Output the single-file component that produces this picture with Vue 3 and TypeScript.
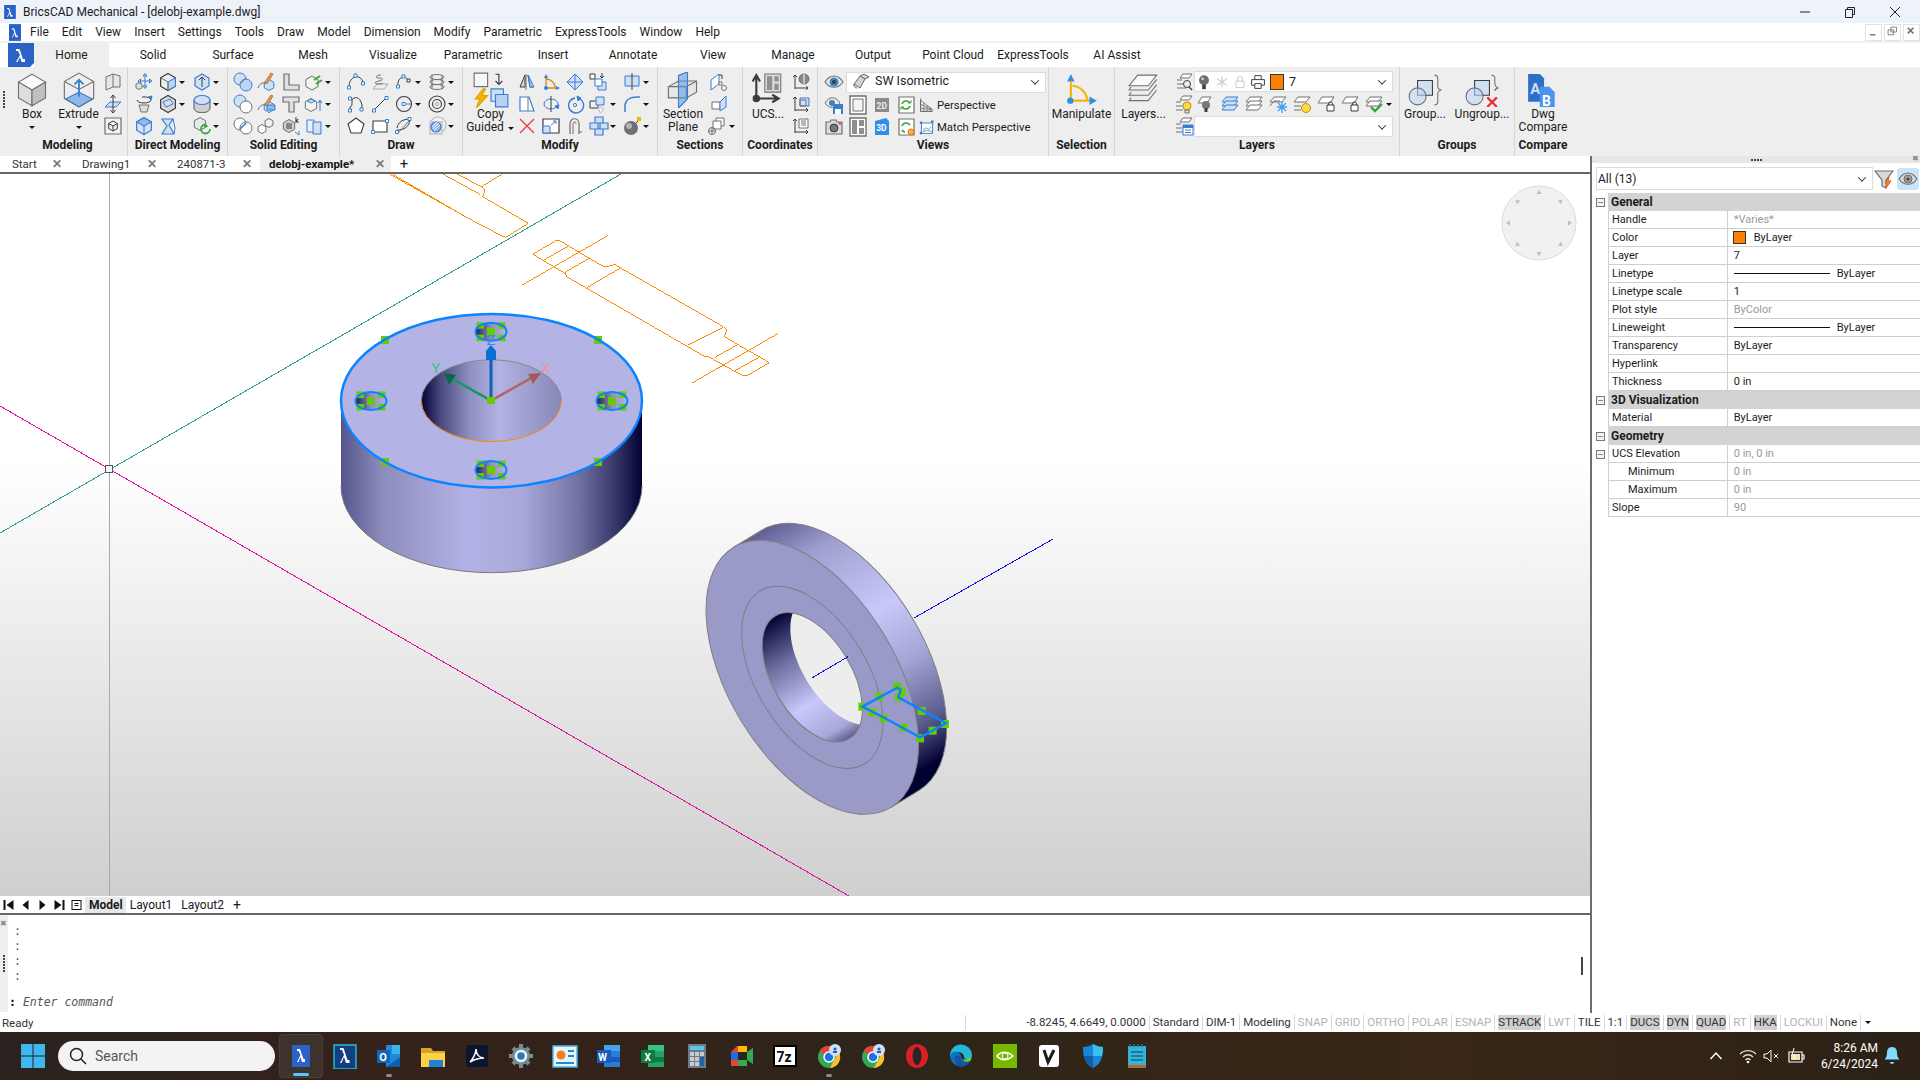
<script setup lang="ts">
import { h } from "vue";
import type { FunctionalComponent } from "vue";

type Shape =
    | { d: string; s: string; f: string; w: number }
    | { t: string; x: number; y: number; fs: number; f: string };

const P = (d: string, s = "none", f = "none", w = 1): Shape => ({ d, s, f, w });
const T = (t: string, x: number, y: number, fs: number, f: string): Shape => ({ t, x, y, fs, f });
const C = (x: number, y: number, r: number) => `M${x - r} ${y}a${r} ${r} 0 1 0 ${r * 2} 0a${r} ${r} 0 1 0 ${-r * 2} 0z`;
const E = (x: number, y: number, rx: number, ry: number) => `M${x - rx} ${y}a${rx} ${ry} 0 1 0 ${rx * 2} 0a${rx} ${ry} 0 1 0 ${-rx * 2} 0z`;
const R = (x: number, y: number, w: number, ht: number) => `M${x} ${y}h${w}v${ht}h${-w}z`;
const hex = (x: number, y: number, r: number) => {
    const a = r * 0.87;
    const b = r / 2;
    return `M${x} ${y - r}l${a} ${b}v${r}l${-a} ${b}l${-a} ${-b}v${-r}z`;
};
const hexIn = (x: number, y: number, r: number) => {
    const a = r * 0.87;
    const b = r / 2;
    return `M${x - a} ${y - b}L${x} ${y}L${x + a} ${y - b}M${x} ${y}v${r}`;
};

const B = "#3b7dd0";
const G = "#707070";
const D = "#3c3c3c";
const L = "#cfe0f5";
const W = "#f2f2f2";
const GN = "#36a836";
const RD = "#e5343a";
const Y = "#f5b400";

// 32 unit icons for the big ribbon buttons
const LARGE: Record<string, Shape[]> = {
    box: [
        P("M16 2l12 7-12 7-12-7z", G, "#fafafa"),
        P("M4 9l12 7v14L4 23z", G, "#dedede"),
        P("M28 9L16 16v14l12-7z", G, "#bfbfbf")
    ],
    extrude: [
        P("M16 18l12 6-12 7-12-7z", B, "#8db8ec"),
        P(hex(16, 16, 15), G, "none"),
        P("M3 8.5l13 7 13-7", G),
        P("M16 22V7M12 11l4-4 4 4", B, "none", 1.6)
    ],
    copy: [
        P(R(1, 1, 12, 12), G, "#f7f7f7"),
        P("M20 2h3v9M20 8l3 3 3-3", D),
        P("M9 15L2 24h4l-3 8 10-11H8l3-6z", "#e0a000", Y),
        P(R(16, 15, 11, 11), B, L),
        P(R(20, 20, 11, 11), B, "#b6d2f4")
    ],
    section: [
        P("M3 13l9-5 16 0v10l-9 5H3z", G, "#e6e6e6"),
        P("M3 13h16l9-5M19 13v10", G),
        P("M12 3l8-3v24l-8 8z", B, "rgba(90,150,225,.55)")
    ],
    ucs: [
        P("M5 24V4M1.5 8L5 2l3.5 6", D, "none", 2),
        P("M5 24h19M20 20.5l6 3.5-6 3.5", D, "none", 2),
        P(C(5, 24, 3), D, D),
        P(R(13, 1, 15, 17), G, "#dcdcdc"),
        P(R(15, 3, 5, 13) + R(22, 3, 4, 5) + R(22, 10, 4, 6), "none", "#8f8f8f")
    ],
    manipulate: [
        P("M9 8L5.5 1 2 8z", "none", "#2f8fe8"),
        P("M5.5 8v18h18", Y, "none", 2),
        P("M7 12a15 15 0 0 1 14 14", Y, "none", 2),
        P(C(5, 26, 3), "none", "#2f8fe8"),
        P("M23 22l7 4-7 4z", "none", "#2f8fe8")
    ],
    layers: [
        P("M10 2h18l-8 10H2z", G, "#fafafa"),
        P("M4 13l-2 3h18l8-10", G),
        P("M4 18l-2 3h18l8-10", G),
        P("M4 23l-2 3h18l8-10", G)
    ],
    group: [
        P(R(9, 7, 14, 14), D, L),
        P(C(9, 22, 8), G, "rgba(190,215,245,.6)"),
        P("M25 2c4 0 3 4 3 8s0 5 3 6c-3 1-3 2-3 6s1 8-3 8", G)
    ],
    ungroup: [
        P(R(9, 7, 14, 14), D, L),
        P(C(9, 22, 8), G, "rgba(190,215,245,.6)"),
        P("M25 2c4 0 3 4 3 6s0 5 3 6c-3 1-3 2-3 3", G),
        P("M21 23l9 9M30 23l-9 9", RD, "none", 2.2)
    ],
    compare: [
        P("M2 1h11l4 4v22H2z", "none", "#2f6fc4"),
        T("A", 4, 20, 14, "#cfe0f5"),
        P("M13 13h9l5 5v17H13z", "none", "#4a93ee"),
        T("B", 15, 31, 13, "#fff")
    ]
};

// 20 unit icons for the small ribbon buttons
const SMALL: Record<string, Shape[]> = {
    wall: [P("M3 5l7-3 0 13-7 3zM10 2l7 2v11l-3 0-4 0", G, "#e6e6e6")],
    plane: [P("M2 13l5-5h11l-5 5z", B, L), P("M10 1v18M7.5 4l2.5-3 2.5 3M7.5 16l2.5 3 2.5-3", D)],
    framecube: [P(R(2, 2, 16, 16), G, W, 1.2), P(hex(10, 10, 5) + hexIn(10, 10, 5), D)],
    move: [P(hex(5, 14, 3.5), G, "#ddd"), P("M11 2v14M4 9h14", B), P("M9 4l2-2.5 2 2.5zM9 14l2 2.5 2-2.5zM15.5 7l2.5 2-2.5 2zM6.5 7L4 9l2.5 2z", B, L)],
    pushA: [P(hex(10, 10, 8.5), D, "#eee", 1.2), P("M10 10l7.4-4v8l-7.4 4.5z", B, "#bcd5f2"), P("M3 6l7 4v8", G)],
    arrowHex: [P(hex(10, 10, 8), B, L, 1.2), P("M10 15V5M7 8l3-3 3 3", D)],
    revolve: [P("M5 11h10l-2 7H7z", G, "#ddd"), P("M3 6a7 3 0 0 0 14 0a7 3 0 0 0-9-3", D), P("M14 3l3 3 1-4z", B, B)],
    pushB: [P(hex(10, 10, 8.5), D, "#d9d9d9", 1.2), P("M5 8l7-3 3 5-7 3z", B, L)],
    cyl: [P("M2 6v8c0 6 16 6 16 0V6", G, "#cfcfcf", 1.2), P(E(10, 6, 8, 4.5), B, L, 1.2)],
    cubeBlue: [P(hex(10, 10, 8.5), B, "#cfe3fa", 1.2), P(hexIn(10, 10, 8.5), B), P("M2.6 6L10 2l7.4 4-7.4 4z", B, "#8db8ec")],
    twist: [P("M4 3h11l-4 6 5 9H4l5-8z", B, L, 1.2), P("M15 3l2 9-1 6", B)],
    rotateCube: [P(hex(8, 8, 6.5), G, "#e8e8e8"), P("M18 13a4.5 4.5 0 1 1-4.5-4.5", GN, "none", 1.8), P("M12 11l1.5-3 2 2.5z", GN, GN)],
    unionA: [P(C(7, 7, 6), B, L), P(C(13, 13, 6), B, "#bcd5f2"), P("M8 11l5-5", G)],
    paintA: [P(hex(13, 13, 5.5), B, L), P("M2 16c2-6 7-6 8-4", G), P("M9 10l6-9 2 1-6 10z", "#c27a3c", "#d89a5c")],
    angleL: [P("M3 2h5v11h10v5H3z", G, "#e0e0e0", 1.2)],
    cubeGreen: [P(hex(8, 11, 7), G, W), P("M10 8l6-4M12 12l6-4", GN, "none", 2)],
    unionB: [P(C(7, 7, 6), B, L), P(C(13, 13, 6), G, "#fff")],
    paintB: [P(hex(13, 13, 5.5), B, L), P("M2 16c2-6 7-6 8-4", G), P("M9 10l6-9 2 1-6 10z", "#c27a3c", "#d89a5c"), P(R(11, 11, 8, 5), B, "#8db8ec")],
    angleT: [P("M2 3h16v5h-5v10H8V8H2z", G, "#e0e0e0", 1.2)],
    cubeUp: [P(hex(7, 11, 6.5), G, W), P("M3 7l4-2 4 2-4 2z", B, L), P("M16 17V6M14 9l2-3 2 3", B)],
    unionC: [P(C(7, 8, 6), G, "#fff"), P(C(13, 12, 6), G, "#fff"), P("M7 13l6-6", B, "none", 1.6)],
    cubes: [P(hex(6, 13, 4.5), G, "#fff"), P(hex(13, 7, 4.5), G, "#f0f0f0")],
    notes: [P(hex(8, 10, 6.5), G, "#d0d0d0"), P("M5 8h6M5 10h6M5 12h6", D), P("M14 16l4 3M18 15v4", B), T("k", 14, 7, 7, D)],
    slabs: [P("M3 4h7v12H3z", B, "#e8f0fb"), P("M9 6h8v12H9z", B, L)],
    arc: [P("M3 15C3 4 14 1 17 10", D), P(R(1.5, 14, 3, 3) + R(15.5, 10, 3, 3) + R(8, 2, 3, 3), B, "#fff")],
    spiral: [P("M3 17l4-5h11l-4 5z", "#aaa", "#eee"), P("M11 3c-6 0-6 3-2 3s5 2 0 3-5 3 0 3 3-1 3-1", G)],
    arc2: [P("M4 14C3 6 10 2 14 8", D), P(R(2.5, 13, 3, 3) + R(8, 3, 3, 3), B, "#fff"), P(R(13, 7, 3, 3), D, "#fff")],
    helix: [P("M5 3v14M15 3v14", G), P(E(10, 5, 7, 2.5) + E(10, 10, 7, 2.5) + E(10, 15, 7, 2.5), G)],
    poly: [P("M4 16V13C8 12 4 5 8 4s6 0 8 7v4", D), P(R(2.5, 15, 3, 3) + R(2.5, 3, 3, 3) + R(14, 14, 3, 3), B, "#fff")],
    line: [P("M4 16L16 4", D), P(R(2.5, 15, 3, 3) + R(15, 2.5, 3, 3), B, "#fff")],
    circ: [P(C(10, 10, 7.5), D, "none", 1.1), P(R(8, 8.5, 3, 3), B, "#fff"), P("M11 10h6", B)],
    donut: [P(C(10, 10, 8) + C(10, 10, 4.5), D, "none", 1.1), P(C(10, 10, 1.5), "#aaa")],
    pent: [P("M10 2l8 6-3 9H5L2 8z", D, "#fff", 1.1)],
    rect: [P(R(3, 5, 14, 11), D, "#fff", 1.1), P(R(1.5, 14.5, 3, 3) + R(15.5, 3.5, 3, 3), B, "#fff")],
    leaf: [P("M3 12C4 6 9 3 16 3M3 14c7 0 12-3 13-10", D), P("M4 17l12-13", G), P(R(1.5, 14.5, 3, 3) + R(14, 1.5, 3, 3), B, "#fff")],
    hatch: [P(C(11, 9, 8), "#c4c4c4", "#f2f2f2", 1.4), P(R(3, 6, 12, 12), "#c4c4c4", "#e8e8e8", 1.4), P(C(9, 11, 5), B, "#8db8ec", 1.2), P("M6 13l6-6M7 15l6-6M5 11l5-5", "#fff")],
    flip: [P("M8 3L3 15h5zM11 3l5 12h-3z", D, "#d8d8d8"), P("M9 2v16", G), P("M11 3l6 12h-4z", B, "#9fc2ef")],
    angleDim: [P("M5 16H15M5 7c5 0 9 4 9 8M5 5v11", "#cf8a10", "none", 1.3), P("M3 6l2-4 2 4z", "none", B), P(C(5, 16, 2), "none", B), P("M15 14l4 2-4 2z", "none", B)],
    moveD: [P("M10 2l8 8-8 8-8-8z", B, L), P("M10 2v16M2 10h16", B)],
    arrDown: [P(R(1, 2, 5, 5), D, "#fff"), P(R(9, 10, 8, 8), B, L), P(R(6, 7, 7, 7), B, "#fff"), P("M13 1v5M11 4l2 2 2-2", D)],
    mirrorH: [P(R(3, 4, 14, 10), B, L), P("M10 1v17", D)],
    taper: [P("M3 3h9l5 14H3z", B, "#fff", 1.2), P("M11 3v14", G)],
    rotC: [P("M3 10a7 5 0 0 1 14 0M17 10a7 5 0 0 1-14 0", B), P("M10 2v16", D), P("M14 12l3 3 1-4z", B, B)],
    rotD: [P("M15 5a7.5 7.5 0 1 1-5-1", B, "none", 1.4), P(C(10, 11, 1.6), B), P("M12 2l4 2-3 3z", B, B)],
    stretch: [P(R(1, 7, 8, 7), D, "#eee"), P(R(7, 3, 8, 8), B, L), P("M9 13l5 1v3l-3 2z", "#bbb", "#f4f4f4")],
    fillet: [P("M3 18v-6C3 6 8 3 15 3h3", B, "none", 1.5)],
    del: [P("M3 3l14 14M17 3L3 17", RD, "none", 1.2)],
    scale: [P(R(2, 3, 16, 14), D, "#fff", 1.2), P(R(2, 10, 7, 7), B, L), P("M10 9l5-4M12 5h3v3", B)],
    pedit: [P("M5 18V8c0-7 9-7 9 0v10", G, "none", 1.2), P("M8 18V8c0-3 3-3 3 0", G), P("M14 16h3", G)],
    arrayD: [P(R(6, 1, 8, 6) + R(1, 7, 8, 6) + R(11, 7, 8, 6) + R(6, 13, 8, 6), B, L, 1.2)],
    bomb: [P(C(9, 12, 7), "none", "#6f6f6f"), P(C(7, 10, 3), "none", "#b4b4b4"), P("M14 7l3-3", D), P(R(15, 1, 4, 4), "none", Y)],
    planeA: [P("M3 8l8-6v10l-8 6z", B, "#fff"), P(R(11, 10, 3, 3) + C(16, 16, 2.5), G, "#fff"), P("M11 3h3v4", D)],
    planeB: [P("M4 8h8v7H4z", G, "#fff"), P("M12 8l6-6v11l-6 4z", B, L)],
    planeC: [P(R(8, 2, 8, 8), G, "#fff"), P(R(5, 5, 8, 8), G, "#fff"), P(C(4, 15, 3.5) + "M4 11.5v7M0.5 15h7", G)],
    ucsWorld: [P("M3 17V3M1 5l2-2 2 2M3 16h13M14 14l2 2-2 2", D), P(C(12, 7, 5), G, "#888"), P("M12 2v10", "#fff")],
    ucsFace: [P("M3 17V3M1 5l2-2 2 2M3 16h13M14 14l2 2-2 2", D), P(R(8, 4, 9, 8), B, L), P(R(8, 6, 6, 6), G)],
    ucsView: [P("M3 17V3M1 5l2-2 2 2M3 16h13M14 14l2 2-2 2", D), P(R(7, 3, 9, 9), G, "#fff"), P("M9 5h5M9 7h5M9 9h5", G)],
    eye: [P("M1 10c5-8 13-8 18 0c-5 7-13 7-18 0z", G, "#e8e8e8", 1.2), P(C(10, 10, 4.5), "none", "#4f7fae"), P(C(10, 10, 2), "none", "#1f3f5f")],
    eyeSave: [P("M1 8c4-7 11-7 15 0c-4 6-11 6-15 0z", G, "#e8e8e8"), P(C(8, 8, 3), "none", "#4f7fae"), P(R(9, 9, 10, 10), "none", B), P(R(11, 14, 6, 5), "none", "#fff")],
    frame1: [P(R(2, 1, 16, 18), G, "#fff", 1.4), P(R(5, 4, 10, 12), G, "#f4f4f4")],
    frame2: [P(R(2, 1, 16, 18), G, "#fff", 1.4), P(R(4, 3, 5, 14) + R(11, 3, 5, 6) + R(11, 11, 5, 6), "none", "#8f8f8f")],
    d2: [P(R(3, 3, 14, 14), "none", "#8a8a8a"), T("2D", 4.5, 13.5, 8.5, "#eee")],
    d3: [P("M3 4l11-3 3 3v14H3z", "none", "#2f8fe8"), T("3D", 4.2, 14, 8.5, "#fff")],
    refresh: [P(R(3, 2, 15, 16), G, "#fff", 1.2), P("M6 9a4.5 4.5 0 0 1 8-1M14 11a4.5 4.5 0 0 1-8 1", GN, "none", 1.6), P("M12 8h3V5M8 12H5v3", GN)],
    refresh2: [P(R(3, 2, 15, 16), G, "#fff", 1.2), P("M6 9a4.5 4.5 0 0 1 8-1M6 13a4 4 0 0 0 3 2", GN, "none", 1.6), P(C(15, 15, 3), "#f06a10", "#f8b040")],
    camera: [P("M2 5h4l1-2h5l1 2h5v12H2z", G, "#dcdcdc", 1.2), P(C(10, 11, 4), D, "#777"), P(R(15, 6, 2, 1), RD)],
    persp: [P("M2 2v16h15", D), P("M2 4l15 12M2 9l15 7M2 14l15 2M6 7v11M10 10v8M14 13v5", G)],
    match: [P(R(3, 5, 14, 13), B, "#fff", 1.2), P(R(1, 3, 3, 3) + R(15, 2, 3, 3) + R(1, 16, 3, 3), "none", B), P("M5 14l4-3 3 2 3-3", B), P("M5 16c3-2 8-2 11 0", G)],
    layerF: [P("M3 16h9M3 12h7M3 8h5", G), P("M6 6l3-4h9l-3 4z", G, "#fff"), P(C(13, 12, 3.5), D, "#eee"), P("M15 15l3 3", D, "none", 1.4)],
    layerY: [P("M2 16h7M2 12h7M2 8h5", G), P("M6 6l3-4h9l-3 4z", G, "#fff"), P(C(13, 12, 4), "#c09000", "#ffd84a"), P(R(11, 16, 4, 3), G, "#ddd")],
    layerM: [P("M2 16h8M2 12h6M2 8h5", G), P("M6 6l3-4h9l-3 4z", G, "#fff"), P(R(9, 9, 10, 10), B, "#fff"), P(R(9, 9, 10, 3), "none", B), P("M11 14h6M11 16.5h6", B)],
    bulb: [P(C(10, 8, 5.5), "none", "#6e6e6e"), P(R(8, 13, 4, 5), "none", D), P(C(8.5, 6.5, 1.5), "none", "#d8d8d8")],
    snow: [P("M10 3v14M4 6l12 8M16 6L4 14", "#c6d0da", "none", 1.6)],
    lock: [P(R(5, 9, 10, 8), "#c0c0c0", "#fff"), P("M7 9V6c0-4 6-4 6 0v3", "#c0c0c0")],
    print: [P("M6 7V2h8v5M6 14H2V7h16v7h-4", D, "#fff", 1.2), P(R(6, 12, 8, 6), D, "#fff", 1.2)],
    layBulb: [P("M2 9l4-6h9l-4 6z", G, "#fff"), P(C(10, 11, 4), "none", "#777"), P(R(8.5, 14, 3, 4), "none", D)],
    layBlue: [P("M2 8l4-5h12l-4 5z", B, L), P("M2 12l4-5h12l-4 5z", B, L), P("M2 16l4-5h12l-4 5z", B, L)],
    layGray: [P("M2 8l4-5h12l-4 5z", G, "#fff"), P("M2 12l4-5h12l-4 5z", G, "#fff"), P("M2 16l4-5h12l-4 5z", G, "#fff")],
    layFrz: [P("M2 8l4-5h12l-4 5z", G, "#fff"), P("M2 12l4-5h6", G), P("M14 8v11M9 13h10M10 9l8 8M18 9l-8 8", "#3f9df5", "none", 1.3)],
    laySun: [P("M2 8l4-5h12l-4 5z", G, "#fff"), P("M2 12h7M2 16h7", G), P(C(14, 14, 4.5), "#c09000", "#ffd84a")],
    layLock: [P("M2 9l4-6h12l-4 6z", G, "#fff"), P(R(11, 11, 7, 6), D, "#fff"), P("M12.5 11V9.5c0-2 4-2 4 0V11", D)],
    layChk: [P("M2 8l4-5h12l-4 5z", G, "#fff"), P("M2 12l4-5h12l-4 5z", G, "#fff"), P("M7 13l4 4 7-7", GN, "none", 2.4)],
    mini: [P(R(4, 13, 8, 2), "none", "#707070")],
    resto: [P(R(3, 7, 8, 7) + R(7, 3, 8, 7), "#707070", "#fff", 1.2)],
    xsm: [P("M4 4l8 8M12 4l-8 8", "#707070", "none", 2.2)],
    filter: [P("M1 2h18l-7 9v8l-4-2v-6z", G, "#d9d9d9", 1.2), P("M15 8l-4 6h3l-2 5 5-7h-3z", "#e06010", "#ff8a1a")],
    eyeBtn: [P("M1 10c5-8 13-8 18 0c-5 7-13 7-18 0z", G, "#d8d8d8", 1.2), P(C(10, 10, 4), G, "#a0a0a0"), P(C(10, 10, 1.6), "none", "#444")]
};

// 26 unit icons for the taskbar
const TASK: Record<string, Shape[]> = {
    bc1: [P(R(4, 2, 18, 22), "none", "#2a62c8"), P("M9 19l3.5-7-2-4H9V6h3l3.5 10h1.5v3h-3l-1.5-5-2 5z", "none", "#fff")],
    bc2: [P(R(2, 2, 22, 24), "#25c3c3", "#123f84", 1.4), P("M8 20l4-8-2-5H8V5h3.5l4 12 2 0v3h-3.5l-2-6-2.5 6z", "none", "#fff")],
    outlook: [P(R(10, 2, 14, 22), "none", "#1c8ad8"), P(R(16, 2, 8, 9), "none", "#39b4ea"), P("M10 24l14-10v10z", "none", "#0f5fb0"), P(R(1, 7, 13, 13), "none", "#0f65b8"), T("O", 3.2, 18, 11, "#fff")],
    folder: [P("M1 5h10l2 3h12v16H1z", "none", "#d9a221"), P(R(1, 10, 24, 14), "none", "#fbd145"), P(R(9, 17, 14, 7), "none", "#1f84d8")],
    acrobat: [P("M2 5a3 3 0 0 1 3-3h16a3 3 0 0 1 3 3v16a3 3 0 0 1-3 3H5a3 3 0 0 1-3-3z", "none", "#0a1630"), P("M6 19c3-3 6-9 6-13 0 5 3 9 8 9-6 0-9 1-14 4z", "#fff", "none", 1.5)],
    gear: [P(R(11, 1, 4, 24) + R(1, 11, 24, 4), "none", "#7d8a92"), P("M5 5l16 16M21 5L5 21", "#7d8a92", "none", 4), P(C(13, 13, 9), "none", "#7d8a92"), P(C(13, 13, 5), "#dff", "#3d6fb8", 2.5)],
    chart: [P(R(1, 3, 24, 21), "#4ab4e8", "#e8f4fb", 1.5), P(C(9, 12, 4.5), "none", "#f08020"), P(R(16, 7, 6, 2) + R(16, 12, 6, 2) + R(4, 19, 18, 2), "none", "#1c8ad8")],
    word: [P(R(8, 2, 16, 22), "none", "#2b7cd3"), P(R(8, 2, 16, 6), "none", "#41a5ee"), P(R(8, 14, 16, 5), "none", "#185abd"), P(R(1, 7, 14, 13), "none", "#185abd"), T("W", 2.3, 17.5, 10, "#fff")],
    excel: [P(R(8, 2, 16, 22), "none", "#21a366"), P(R(8, 2, 16, 6), "none", "#33c481"), P(R(8, 14, 16, 5), "none", "#107c41"), P(R(1, 7, 14, 13), "none", "#107c41"), T("X", 4.5, 17.5, 10, "#fff")],
    calc: [P(R(4, 1, 18, 24), "none", "#6f7c85"), P(R(6, 3, 14, 4), "none", "#5fc4ea"), P(R(6, 9, 4, 4) + R(11, 9, 4, 4) + R(16, 9, 4, 4) + R(6, 14, 4, 4) + R(11, 14, 4, 4) + R(6, 19, 4, 4) + R(11, 19, 4, 4), "none", "#c4ccd2"), P(R(16, 14, 4, 9), "none", "#1e62b0")],
    meet: [P("M3 9l6-6h10v20H9l-6 0z", "none", "#ea4335"), P(R(3, 9, 7, 8), "none", "#1f6fd8"), P(R(10, 3, 9, 7), "none", "#fbbc04"), P(R(10, 16, 9, 7), "none", "#34a853"), P(R(10, 9, 9, 8), "none", "#2b2420"), P("M19 9l6-4v16l-6-4z", "none", "#34a853")],
    seven: [P(R(2, 3, 22, 20), "#000", "#fff", 1.5), P(R(2, 3, 22, 20), "#000", "none", 2), T("7z", 4.5, 19, 14, "#111")],
    chrome: [P(C(13, 14, 11), "none", "#34a853"), P("M13 3a11 11 0 0 1 10 6H13a5 5 0 0 0-5 3L4 7a11 11 0 0 1 9-4z", "none", "#ea4335"), P("M23 9a11 11 0 0 1-9 16l4-8a5 5 0 0 0 0-8z", "none", "#fbc02d"), P(C(13, 14, 5), "#fff", "#1a73e8", 1.5), P(C(19, 7, 6), "none", "#cfe0f5"), P(C(19, 6, 1.6) + R(17, 8, 4, 2), "none", "#1a5fb8")],
    opera: [P(E(13, 13, 11, 12), "none", "#d81f26"), P(E(13, 13, 4.5, 9), "none", "#2b2420")],
    edge: [P("M2 13a11 11 0 0 1 22-1c0 5-8 6-8 2 0-5-8-7-11-1", "none", "#23b8d8"), P("M2 13c1-5 10-6 11 0 1 6 6 7 10 4a11 11 0 0 1-21-4z", "none", "#0f6fc0"), P("M7 14c2-2 6-2 6 2 0 3 4 5 8 3a11 11 0 0 1-9 5c-4-2-6-6-5-10z", "none", "#1452a0"), P("M14 14c0 4 8 3 10-1a11 11 0 0 0-1 4c-4 3-8 2-9-3z", "none", "#7ed321")],
    nvidia: [P(R(1, 1, 24, 24), "none", "#76b900"), P("M5 13c4-5 10-5 16 0-6 5-12 5-16 0z", "#fff", "none", 1.4), P(C(13, 13, 3), "#fff")],
    vee: [P("M3 5a3 3 0 0 1 3-3h14a3 3 0 0 1 3 3v16a3 3 0 0 1-3 3H6a3 3 0 0 1-3-3z", "none", "#fff"), P("M8 7l4 12L18 7", "#1c1c1c", "none", 3)],
    shield: [P("M13 1c3 2 7 3 10 3 0 10-2 17-10 21C5 21 3 14 3 4c3 0 7-1 10-3z", "none", "#1a86d8"), P("M13 1c3 2 7 3 10 3 0 4-.4 7-1 9H13z", "none", "#3dc0f0"), P("M13 13H4c1 5 4 9 9 12z", "none", "#0f5fa8")],
    notepad: [P(R(4, 3, 18, 22), "none", "#33b3d8"), P(R(4, 22, 18, 3), "none", "#b46a2a"), P("M6 1v3M10 1v3M14 1v3M18 1v3", "#16708c", "none", 1.6), P("M7 9h12M7 13h12M7 17h12", "#0f6a88", "none", 1.6)]
};

const Ico: FunctionalComponent<{ n: string; s?: number }> = (props) => {
    const big = props.n in LARGE;
    const task = props.n in TASK;
    const shapes = LARGE[props.n] ?? TASK[props.n] ?? SMALL[props.n] ?? [];
    const vb = big ? 32 : task ? 26 : 20;
    const size = props.s ?? vb;
    const kids = shapes.map((sh) =>
        "t" in sh
            ? h("text", { x: sh.x, y: sh.y, "font-size": sh.fs, fill: sh.f, "font-weight": 700, "font-family": "Roboto, sans-serif" }, sh.t)
            : h("path", { d: sh.d, stroke: sh.s, fill: sh.f, "stroke-width": sh.w })
    );
    return h("svg", { width: size, height: size, viewBox: `0 0 ${vb} ${vb}`, class: "ico" }, kids);
};
Ico.props = ["n", "s"];

const menus = ["File", "Edit", "View", "Insert", "Settings", "Tools", "Draw", "Model", "Dimension", "Modify", "Parametric", "ExpressTools", "Window", "Help"];
const tabs = ["Solid", "Surface", "Mesh", "Visualize", "Parametric", "Insert", "Annotate", "View", "Manage", "Output", "Point Cloud", "ExpressTools", "AI Assist"];

interface Cell { i: string; c?: boolean }
interface Col { w: number; large?: string; s?: number; label?: string[]; caret?: boolean; items?: Cell[] }
interface Group { title: string; w: number; pad: number; cols: Col[] }

const leftGroups: Group[] = [
    {
        title: "Modeling", w: 120, pad: 0, cols: [
            { w: 48, large: "box", s: 36, label: ["Box"], caret: true },
            { w: 45, large: "extrude", s: 36, label: ["Extrude"], caret: true },
            { w: 27, items: [{ i: "wall" }, { i: "plane" }, { i: "framecube" }] }
        ]
    },
    {
        title: "Direct Modeling", w: 100, pad: 4, cols: [
            { w: 24, items: [{ i: "move" }, { i: "revolve" }, { i: "cubeBlue" }] },
            { w: 34, items: [{ i: "pushA", c: true }, { i: "pushB", c: true }, { i: "twist" }] },
            { w: 38, items: [{ i: "arrowHex", c: true }, { i: "cyl", c: true }, { i: "rotateCube", c: true }] }
        ]
    },
    {
        title: "Solid Editing", w: 112, pad: 3, cols: [
            { w: 23, items: [{ i: "unionA" }, { i: "unionB" }, { i: "unionC" }] },
            { w: 25, items: [{ i: "paintA" }, { i: "paintB" }, { i: "cubes" }] },
            { w: 23, items: [{ i: "angleL" }, { i: "angleT" }, { i: "notes" }] },
            { w: 38, items: [{ i: "cubeGreen", c: true }, { i: "cubeUp", c: true }, { i: "slabs", c: true }] }
        ]
    },
    {
        title: "Draw", w: 123, pad: 4, cols: [
            { w: 24, items: [{ i: "arc" }, { i: "poly" }, { i: "pent" }] },
            { w: 24, items: [{ i: "spiral" }, { i: "line" }, { i: "rect" }] },
            { w: 33, items: [{ i: "arc2", c: true }, { i: "circ", c: true }, { i: "leaf", c: true }] },
            { w: 38, items: [{ i: "helix", c: true }, { i: "donut", c: true }, { i: "hatch", c: true }] }
        ]
    },
    {
        title: "Modify", w: 195, pad: 3, cols: [
            { w: 49, large: "copy", s: 36, label: ["Copy", "Guided"], caret: true },
            { w: 24, items: [{ i: "flip" }, { i: "taper" }, { i: "del" }] },
            { w: 24, items: [{ i: "angleDim" }, { i: "rotC" }, { i: "scale" }] },
            { w: 24, items: [{ i: "moveD" }, { i: "rotD" }, { i: "pedit" }] },
            { w: 33, items: [{ i: "arrDown" }, { i: "stretch", c: true }, { i: "arrayD", c: true }] },
            { w: 36, items: [{ i: "mirrorH", c: true }, { i: "fillet", c: true }, { i: "bomb", c: true }] }
        ]
    },
    {
        title: "Sections", w: 85, pad: 2, cols: [
            { w: 46, large: "section", s: 36, label: ["Section", "Plane"] },
            { w: 35, items: [{ i: "planeA" }, { i: "planeB" }, { i: "planeC", c: true }] }
        ]
    },
    {
        title: "Coordinates", w: 75, pad: 3, cols: [
            { w: 44, large: "ucs", s: 34, label: ["UCS..."] },
            { w: 27, items: [{ i: "ucsWorld" }, { i: "ucsFace" }, { i: "ucsView" }] }
        ]
    }
];

const layerRow = ["layBulb", "layBlue", "layGray", "layFrz", "laySun", "layLock", "layLock", "layChk"];

const rows = [
    { k: "General", head: true },
    { k: "Handle", v: "*Varies*", dim: true },
    { k: "Color", v: "ByLayer", swatch: true },
    { k: "Layer", v: "7" },
    { k: "Linetype", v: "ByLayer", rule: true },
    { k: "Linetype scale", v: "1" },
    { k: "Plot style", v: "ByColor", dim: true },
    { k: "Lineweight", v: "ByLayer", rule: true },
    { k: "Transparency", v: "ByLayer" },
    { k: "Hyperlink", v: "" },
    { k: "Thickness", v: "0 in" },
    { k: "3D Visualization", head: true },
    { k: "Material", v: "ByLayer" },
    { k: "Geometry", head: true },
    { k: "UCS Elevation", v: "0 in, 0 in", dim: true, tog: true },
    { k: "Minimum", v: "0 in", dim: true, sub: true },
    { k: "Maximum", v: "0 in", dim: true, sub: true },
    { k: "Slope", v: "90", dim: true }
];

const status = [
    { t: "-8.8245, 4.6649, 0.0000" }, { t: "Standard" }, { t: "DIM-1" }, { t: "Modeling" },
    { t: "SNAP", off: true }, { t: "GRID", off: true }, { t: "ORTHO", off: true }, { t: "POLAR", off: true }, { t: "ESNAP", off: true },
    { t: "STRACK", on: true }, { t: "LWT", off: true }, { t: "TILE" }, { t: "1:1" },
    { t: "DUCS", on: true }, { t: "DYN", on: true }, { t: "QUAD", on: true }, { t: "RT", off: true }, { t: "HKA", on: true }, { t: "LOCKUI", off: true }, { t: "None" }
];

const taskIcons = ["bc1", "bc2", "outlook", "folder", "acrobat", "gear", "chart", "word", "excel", "calc", "meet", "seven", "chrome", "chrome", "opera", "edge", "nvidia", "vee", "shield", "notepad"];
const smallHoles = [[371, 401], [612, 401], [491, 331.7], [491, 470]];
const holeGrips = [[-14.5, -9.5], [7, -9.5], [-14.5, 3], [7, 3]];
const cornerGrips = [[385, 340], [598, 340], [385, 462], [598, 462]];
const tabGrips = [[517, 590], [568, 560], [622, 530], [635, 545], [627, 562], [695, 603], [765, 642], [728, 662], [690, 685], [640, 653], [580, 625], [548, 607]];
const compass = [0, 45, 90, 135, 180, 225, 270, 315];
const navPaths = [
    "M3 3h2v10H3zM13 3v10L6 8z",
    "M11 3v10L5 8z",
    "M5 3v10l6-5z",
    "M11 3h2v10h-2zM3 3v10l7-5z",
    "M3 3h10v10H3zM4 4v8h8V4zM6 6h4v1H6zM6 8h4v1H6z"
];
</script>

<template>
    <div class="shell">
        <header class="title">
            <svg class="title-logo" width="12" height="14" viewBox="0 0 20 24"><path d="M0 0h20v24H0z" fill="#2a62c8" /><path d="M5 20l4-8-2-5H5V5h3.5l4 12 2 0v3h-3.5l-2-6-2.5 6z" fill="#fff" /></svg>
            <span class="title-text">BricsCAD Mechanical - [delobj-example.dwg]</span>
            <div class="win">
                <svg width="12" height="12" viewBox="0 0 12 12"><path d="M1 6h10" stroke="#222" /></svg>
                <svg width="12" height="12" viewBox="0 0 12 12"><path d="M1.5 3.5h7v8h-7zM3.5 3.5v-2h7v7h-2" stroke="#222" fill="none" /></svg>
                <svg width="12" height="12" viewBox="0 0 12 12"><path d="M1 1l10 10M11 1L1 11" stroke="#222" /></svg>
            </div>
        </header>

        <nav class="menu">
            <svg class="menu-logo" width="12" height="17" viewBox="0 0 20 28"><path d="M0 0h20v28H0z" fill="#2a62c8" /><path d="M5 22l4-8-2-5H5V7h3.5l4 12 2 0v3h-3.5l-2-6-2.5 6z" fill="#fff" /></svg>
            <span v-for="m in menus" :key="m" class="menu-item">{{ m }}</span>
            <div class="mdi">
                <span class="mdi-btn"><Ico n="mini" :s="14" /></span>
                <span class="mdi-btn"><Ico n="resto" :s="14" /></span>
                <span class="mdi-btn"><Ico n="xsm" :s="14" /></span>
            </div>
        </nav>

        <div class="tabs">
            <span class="app-btn"><svg width="26" height="24" viewBox="0 0 26 24"><path d="M0 0h26v24H0z" fill="#2a62c8" /><path d="M22 24l4-4v4z" fill="#fff" /><path d="M8 19l4-7-2-4H8V6h3.5l3.5 10 2 0v3h-3.5l-1.5-5-2.5 5z" fill="#fff" /></svg></span>
            <span class="tab tab-home">Home</span>
            <span v-for="t in tabs" :key="t" class="tab">{{ t }}</span>
        </div>

        <section class="ribbon">
            <div class="grip-strip"><i v-for="n in 6" :key="n" /></div>

            <div v-for="g in leftGroups" :key="g.title" class="grp" :style="{ width: g.w + 'px' }">
                <div class="grp-body" :style="{ paddingLeft: g.pad + 'px' }">
                    <div v-for="(col, ci) in g.cols" :key="ci" :style="{ width: col.w + 'px' }" :class="col.large ? 'large' : 'col'">
                        <template v-if="col.large">
                            <span class="lg-ic"><Ico :n="col.large" :s="col.s" /></span>
                            <span v-for="(l, li) in col.label" :key="l" class="lbl">{{ l }}<i v-if="col.caret && li === 1" class="caret caret-in" /></span>
                            <i v-if="col.caret && col.label?.length === 1" class="caret caret-low" />
                        </template>
                        <template v-else>
                            <div v-for="(c, ii) in col.items" :key="ii" class="sm">
                                <Ico :n="c.i" />
                                <i v-if="c.c" class="caret" />
                            </div>
                        </template>
                    </div>
                </div>
                <div class="grp-title">{{ g.title }}</div>
            </div>

            <div class="grp g-views">
                <div class="view-rows">
                    <div class="view-row view-row-first">
                        <span class="cell"><Ico n="eye" /></span>
                        <div class="drop drop-views">
                            <svg width="24" height="20" viewBox="0 0 24 20"><path d="M4 12l6-8 5 3-5 9zM10 4l4-2 5 3-4 2M7 16a3 3 0 0 1-3-4" stroke="#666" fill="#d4d4d4" /></svg>
                            <span class="drop-text drop-text-view">SW Isometric</span>
                            <i class="chev" />
                        </div>
                    </div>
                    <div class="view-row">
                        <span class="cell"><Ico n="eyeSave" /></span>
                        <span class="cell"><Ico n="frame1" /></span>
                        <span class="cell"><Ico n="d2" /></span>
                        <span class="cell"><Ico n="refresh" /></span>
                        <span class="persp"><Ico n="persp" :s="16" />Perspective</span>
                    </div>
                    <div class="view-row">
                        <span class="cell"><Ico n="camera" /></span>
                        <span class="cell"><Ico n="frame2" /></span>
                        <span class="cell"><Ico n="d3" /></span>
                        <span class="cell"><Ico n="refresh2" /></span>
                        <span class="persp"><Ico n="match" :s="16" />Match Perspective</span>
                    </div>
                </div>
                <div class="grp-title">Views</div>
            </div>

            <div class="grp g-select">
                <div class="grp-body">
                    <div class="large large-full"><span class="lg-ic"><Ico n="manipulate" :s="34" /></span><span class="lbl">Manipulate</span></div>
                </div>
                <div class="grp-title">Selection</div>
            </div>

            <div class="grp g-layers">
                <div class="grp-body">
                    <div class="large g-layers-lg"><span class="lg-ic"><Ico n="layers" :s="34" /></span><span class="lbl">Layers...</span></div>
                    <div class="col g-layers-col">
                        <div class="sm"><Ico n="layerF" /></div>
                        <div class="sm"><Ico n="layerY" /></div>
                        <div class="sm"><Ico n="layerM" /></div>
                    </div>
                    <div class="layer-main">
                        <div class="drop drop-layer">
                            <span class="tiny"><Ico n="bulb" :s="18" /></span>
                            <span class="tiny"><Ico n="snow" :s="16" /></span>
                            <span class="tiny"><Ico n="lock" :s="16" /></span>
                            <span class="tiny"><Ico n="print" :s="16" /></span>
                            <span class="swatch swatch-lg" />
                            <span class="drop-text">7</span>
                            <i class="chev" />
                        </div>
                        <div class="layer-icons">
                            <span v-for="(n, i) in layerRow" :key="i" class="cell"><Ico :n="n" /></span>
                            <i class="caret" />
                        </div>
                        <div class="drop drop-layer"><i class="chev" /></div>
                    </div>
                </div>
                <div class="grp-title">Layers</div>
            </div>

            <div class="grp g-groups">
                <div class="grp-body">
                    <div class="large g-group-a"><span class="lg-ic"><Ico n="group" :s="34" /></span><span class="lbl">Group...</span></div>
                    <div class="large g-group-b"><span class="lg-ic"><Ico n="ungroup" :s="34" /></span><span class="lbl">Ungroup...</span></div>
                </div>
                <div class="grp-title">Groups</div>
            </div>

            <div class="grp g-compare">
                <div class="grp-body">
                    <div class="large large-full"><span class="lg-ic"><Ico n="compare" :s="34" /></span><span class="lbl">Dwg</span><span class="lbl">Compare</span></div>
                </div>
                <div class="grp-title">Compare</div>
            </div>
        </section>

        <div class="work">
            <div class="left">
                <div class="docs">
                    <span class="doc doc-start">Start<b>✕</b></span>
                    <span class="doc doc-mid">Drawing1<b>✕</b></span>
                    <span class="doc doc-mid">240871-3<b>✕</b></span>
                    <span class="doc doc-active">delobj-example*<b>✕</b></span>
                    <span class="doc-plus">+</span>
                </div>

                <svg class="view" width="1590" height="722" viewBox="0 174 1590 722">
                    <defs>
                        <linearGradient id="bg" gradientUnits="userSpaceOnUse" x1="0" y1="174" x2="0" y2="896">
                            <stop offset="0.4" stop-color="#ffffff" />
                            <stop offset="1" stop-color="#cfcfcf" />
                        </linearGradient>
                        <linearGradient id="cyl" gradientUnits="userSpaceOnUse" x1="341" y1="0" x2="642" y2="0">
                            <stop offset="0" stop-color="#55558c" />
                            <stop offset="0.14" stop-color="#8d8dbd" />
                            <stop offset="0.42" stop-color="#b2b2e6" />
                            <stop offset="0.6" stop-color="#a8a8da" />
                            <stop offset="0.78" stop-color="#7676a6" />
                            <stop offset="0.92" stop-color="#333366" />
                            <stop offset="1" stop-color="#000033" />
                        </linearGradient>
                        <linearGradient id="hole" gradientUnits="userSpaceOnUse" x1="421" y1="0" x2="561" y2="0">
                            <stop offset="0" stop-color="#000033" />
                            <stop offset="0.14" stop-color="#4a4a80" />
                            <stop offset="0.35" stop-color="#8f8fc0" />
                            <stop offset="0.56" stop-color="#b2b2e4" />
                            <stop offset="1" stop-color="#8888b8" />
                        </linearGradient>
                        <linearGradient id="mini">
                            <stop offset="0" stop-color="#202050" />
                            <stop offset="0.5" stop-color="#9090c0" />
                            <stop offset="1" stop-color="#b2b2e4" />
                        </linearGradient>
                        <linearGradient id="rim" gradientUnits="userSpaceOnUse" x1="-152" y1="0" x2="152" y2="0">
                            <stop offset="0" stop-color="#5f5f95" />
                            <stop offset="0.15" stop-color="#a0a0d0" />
                            <stop offset="0.42" stop-color="#c8c8fa" />
                            <stop offset="0.62" stop-color="#a4a4d4" />
                            <stop offset="0.82" stop-color="#5a5a8c" />
                            <stop offset="0.95" stop-color="#000033" />
                        </linearGradient>
                        <linearGradient id="wall" gradientUnits="userSpaceOnUse" x1="-72" y1="0" x2="72" y2="0">
                            <stop offset="0" stop-color="#000033" />
                            <stop offset="0.3" stop-color="#6a6a9c" />
                            <stop offset="0.65" stop-color="#c8c8fa" />
                            <stop offset="0.9" stop-color="#a8a8d8" />
                            <stop offset="1" stop-color="#5a5a8c" />
                        </linearGradient>
                        <clipPath id="holeClip"><ellipse cx="0" cy="0" rx="71.6" ry="39.3" /></clipPath>
                    </defs>
                    <rect x="0" y="174" width="1590" height="722" fill="url(#bg)" />

                    <g shape-rendering="crispEdges">
                        <path d="M109 174V896" stroke="#a8a8a8" />
                        <path d="M0 533L621 174" stroke="#2f9a98" />
                        <path d="M0 406L849 896" stroke="#e0109c" />
                    </g>
                    <rect x="105.5" y="465.5" width="7" height="7" fill="#f4f4f4" stroke="#555" />

                    <g transform="translate(380 165) scale(.3333)" fill="none" stroke="#fb8c00" stroke-width="3" shape-rendering="crispEdges">
                        <path d="M30 28L265 160M38 28L265 160M265 160L370 215L378 217L445 175L308 95L315 75L305 65L232 28M190 28L300 88M365 28L305 65" />
                        <path d="M458 268L530 226L538 226L665 302L680 305L705 298L720 308L1030 485L1040 495L1033 515L1168 593L1100 633L1090 633L985 575L975 575L560 335L555 325Z" />
                        <path d="M425 361L685 211M492 285L565 243M555 322L628 280M622 367L720 310M925 540L1030 487M1005 577L1075 538M1065 617L1140 575M935 655L1195 505" />
                    </g>

                    <path d="M341 401V486A150.5 86.7 0 0 0 642 486V401Z" fill="url(#cyl)" />
                    <path d="M341 486A150.5 86.7 0 0 0 642 486" fill="none" stroke="#777" />
                    <ellipse cx="491.5" cy="400.7" rx="150.5" ry="86.7" fill="#b3b3e6" />
                    <ellipse cx="491.3" cy="400.7" rx="70" ry="41" fill="url(#hole)" />
                    <path d="M421.3 400.7A70 41 0 0 0 561.3 400.7" fill="none" stroke="#f68a10" />
                    <path d="M421.3 400.7A70 41 0 0 1 561.3 400.7" fill="none" stroke="#8a8a8a" />

                    <rect v-for="(c, i) in cornerGrips" :key="'c' + i" :x="c[0] - 4" :y="c[1] - 4" width="8" height="8" fill="#66cc00" />
                    <g v-for="(p, i) in smallHoles" :key="'h' + i">
                        <ellipse :cx="p[0]" :cy="p[1]" rx="15.5" ry="9" fill="url(#mini)" />
                        <rect v-for="(o, oi) in holeGrips" :key="oi" :x="p[0] + o[0]" :y="p[1] + o[1]" width="7.5" height="6.5" fill="#66cc00" />
                        <rect :x="p[0] - 4" :y="p[1] - 4" width="8" height="8" fill="#66cc00" />
                        <ellipse :cx="p[0]" :cy="p[1]" rx="15.5" ry="9" fill="none" stroke="#0a84ff" stroke-width="2" />
                    </g>

                    <ellipse cx="491.5" cy="400.7" rx="150.5" ry="86.7" fill="none" stroke="#0a84ff" stroke-width="2.5" />

                    <path d="M491 400.7V347" stroke="#0a63b8" stroke-width="3" />
                    <path d="M486 351L491 345L496 351V360H486Z" fill="#0a6fd0" />
                    <path d="M491 400.7L533 377" stroke="#b06464" stroke-width="2.5" />
                    <path d="M528 374L541 373L533 384Z" fill="#a85858" />
                    <path d="M491 400.7L449 377" stroke="#109a60" stroke-width="2.5" />
                    <path d="M444 373L456 375L449 385Z" fill="#0a6a45" />
                    <rect x="487" y="397" width="8" height="7" fill="#66cc00" />
                    <text x="491" y="345" class="axis" fill="#2f8fe8">Z</text>
                    <text x="436" y="373" class="axis" fill="#28c878">Y</text>
                    <text x="546" y="373" class="axis" fill="#ff9090">X</text>

                    <path d="M1053 539L914 618" stroke="#1010e0" shape-rendering="crispEdges" />
                    <g transform="translate(812.3 677.3) rotate(58.85)">
                        <path d="M-152 -32.8V0H152V-32.8Z" fill="url(#rim)" />
                        <ellipse cx="0" cy="-32.8" rx="152" ry="83.5" fill="url(#rim)" />
                    </g>
                    <g transform="translate(812.3 677.3) rotate(58.85)" fill="none" stroke="#7f7f7f">
                        <path d="M-152 0V-32.8A152 83.5 0 0 1 152 -32.8V0" />
                        <ellipse cx="0" cy="0" rx="152" ry="83.5" fill="#9a9ac8" />
                        <ellipse cx="0" cy="0" rx="101" ry="55.5" />
                    </g>
                    <g transform="translate(812.3 677.3) rotate(58.85)">
                        <ellipse cx="0" cy="0" rx="71.6" ry="39.3" fill="url(#wall)" />
                        <g clip-path="url(#holeClip)">
                            <ellipse cx="0" cy="-32.8" rx="71.6" ry="39.3" fill="#ededed" />
                        </g>
                        <ellipse cx="0" cy="0" rx="71.6" ry="39.3" fill="none" stroke="#7f7f7f" />
                    </g>
                    <path d="M848 656.7L811.7 678" stroke="#1010e0" shape-rendering="crispEdges" />

                    <g transform="translate(690 510) scale(.3333)">
                        <rect v-for="(g, i) in tabGrips" :key="'t' + i" :x="g[0] - 12" :y="g[1] - 12" width="24" height="24" fill="#66cc00" />
                        <path d="M517 590L622 533L632 540L625 562L768 640L690 682L580 622Z" fill="none" stroke="#0a84ff" stroke-width="7" />
                    </g>

                    <circle cx="1539" cy="223" r="37" fill="#f1f1f1" stroke="#dcdcdc" />
                    <g v-for="a in compass" :key="a" :transform="`rotate(${a} 1539 223)`">
                        <path d="M1539 190l-2.5 4h5z" fill="#bdbdbd" />
                    </g>
                </svg>

                <div class="layouts">
                    <svg v-for="(d, i) in navPaths" :key="i" class="nav" width="17" height="16" viewBox="0 0 16 16"><path :d="d" fill="#111" fill-rule="evenodd" /></svg>
                    <span class="lay lay-on">Model</span>
                    <span class="lay">Layout1</span>
                    <span class="lay">Layout2</span>
                    <span class="lay lay-plus">+</span>
                </div>

                <div class="cmd">
                    <div class="cmd-strip"><span>✖</span><div class="cmd-grip"><i v-for="n in 6" :key="n" /></div></div>
                    <div class="cmd-body">
                        <div class="cmd-hist"><span v-for="n in 4" :key="n">:</span></div>
                        <div class="cmd-line"><b>:</b> <em>Enter command</em></div>
                        <i class="cmd-scroll" />
                    </div>
                </div>
            </div>

            <aside class="panel">
                <div class="panel-top"><span class="panel-grip"><i v-for="n in 4" :key="n" /></span><span class="panel-x">✖</span></div>
                <div class="filter">
                    <div class="drop drop-all"><span class="drop-text">All (13)</span><i class="chev" /></div>
                    <span class="filter-ic"><Ico n="filter" /></span>
                    <span class="eye-btn"><Ico n="eyeBtn" /></span>
                </div>
                <div class="props">
                    <div v-for="r in rows" :key="r.k" class="prow" :class="{ 'prow-head': r.head }">
                        <span class="gutter"><i v-if="r.head || r.tog" class="toggle" /></span>
                        <span class="pk" :class="{ 'pk-sub': r.sub }">{{ r.k }}</span>
                        <span v-if="!r.head" class="pv" :class="{ 'pv-dim': r.dim }">
                            <i v-if="r.swatch" class="swatch" />
                            <i v-if="r.rule" class="rule" />
                            {{ r.v }}
                        </span>
                    </div>
                </div>
            </aside>
        </div>

        <footer class="status">
            <span class="ready">Ready</span>
            <div class="st-items">
                <span v-for="s in status" :key="s.t" class="st" :class="{ 'st-off': s.off }"><b :class="{ 'st-on': s.on }">{{ s.t }}</b></span>
                <span class="st st-end"><i class="caret" /></span>
            </div>
        </footer>

        <div class="taskbar">
            <svg class="start" width="24" height="24" viewBox="0 0 24 24">
                <path d="M0 0h11.5v11.5H0zM12.5 0H24v11.5H12.5zM0 12.5h11.5V24H0zM12.5 12.5H24V24H12.5z" fill="#3fb8f2" />
            </svg>
            <div class="search">
                <svg width="18" height="18" viewBox="0 0 18 18"><circle cx="7.5" cy="7.5" r="6" fill="none" stroke="#222" stroke-width="1.5" /><path d="M12 12l5 5" stroke="#222" stroke-width="1.5" /></svg>
                <span>Search</span>
            </div>
            <div class="apps">
                <span v-for="(ic, i) in taskIcons" :key="i" class="tapp" :class="{ 'tapp-on': i === 0, 'tapp-run': i === 2 || i === 12 }"><Ico :n="ic" :s="26" /></span>
            </div>
            <div class="tray">
                <svg class="tray-chev" width="14" height="10" viewBox="0 0 14 10"><path d="M1.5 8L7 2l5.5 6" stroke="#fff" stroke-width="1.5" fill="none" /></svg>
                <svg width="18" height="16" viewBox="0 0 18 16"><path d="M1 6c4.5-4.5 11.5-4.5 16 0M4 9c3-3 7-3 10 0M6.5 12c1.5-1.5 3.5-1.5 5 0" stroke="#ddd" fill="none" stroke-width="1.3" /><circle cx="9" cy="14" r="1.3" fill="#fff" /></svg>
                <svg width="18" height="14" viewBox="0 0 18 14"><path d="M1 5h3l4-4v12l-4-4H1zM11 5l4 4M15 5l-4 4" stroke="#fff" fill="none" /></svg>
                <svg width="18" height="16" viewBox="0 0 18 16"><path d="M2 4h13v10H2zM15 7h2v4h-2z" stroke="#fff" fill="none" stroke-width="1.2" /><path d="M4 6h9v6H4z" fill="#f2e6b0" /><path d="M7 0L5 7h3l-1 4" stroke="#fff" fill="none" /></svg>
                <div class="clock"><span>8:26 AM</span><span>6/24/2024</span></div>
                <svg width="16" height="20" viewBox="0 0 16 20"><path d="M8 1c4 0 5 3 5 6 0 3 1 5 2.5 6.5H.5C2 12 3 10 3 7c0-3 1-6 5-6z" fill="#7fdcff" /><path d="M6 16h4a2 2 0 0 1-4 0z" fill="#7fdcff" /></svg>
            </div>
        </div>
    </div>
</template>

<style scoped>
.shell {
    width: 1920px;
    height: 1080px;
    display: flex;
    flex-direction: column;
    overflow: hidden;
    font-family: Roboto, "Liberation Sans", sans-serif;
    font-size: 12px;
    color: #1c1c1c;
    background: #fff;
}

.ico {
    display: block;
    flex: none;
}

.title {
    height: 23px;
    flex: none;
    display: flex;
    align-items: center;
    background: #eef2f9;
    padding-left: 4px;
    font-size: 12px;
}

.title-logo {
    margin-right: 7px;
}

.win {
    margin-left: auto;
    display: flex;
    gap: 33px;
    padding-right: 19px;
}

.menu {
    height: 18px;
    flex: none;
    display: flex;
    align-items: center;
    padding-left: 9px;
    gap: 13px;
}

.menu-logo {
    margin-right: -4px;
}

.mdi {
    margin-left: auto;
    display: flex;
    gap: 2px;
}

.mdi-btn {
    width: 17px;
    height: 17px;
    border: 1px solid #e2e2e2;
    box-sizing: border-box;
    display: flex;
    align-items: center;
    justify-content: center;
}

.tabs {
    margin-top: 2px;
    height: 24px;
    flex: none;
    display: flex;
    align-items: center;
    padding-left: 8px;
    box-shadow: 0 -2px 0 #f1f1f1;
}

.app-btn {
    width: 26px;
    height: 24px;
}

.tab {
    width: 80px;
    height: 24px;
    line-height: 24px;
    text-align: center;
    flex: none;
}

.tab:last-child {
    margin-left: 4px;
}

.tab-home {
    width: 75px;
    margin-right: 4px;
    background: #eee;
}

.ribbon {
    height: 89px;
    flex: none;
    display: flex;
    background: #eee;
}

.grip-strip {
    width: 8px;
    flex: none;
    padding-top: 24px;
    display: flex;
    flex-direction: column;
    align-items: center;
    gap: 1px;
}

.grip-strip i,
.cmd-grip i {
    width: 2px;
    height: 2px;
    background: #444;
    display: block;
}

.grp {
    flex: none;
    box-sizing: border-box;
    display: flex;
    flex-direction: column;
    border-right: 1px solid #d4d4d4;
}

.grp-body {
    height: 71px;
    margin-top: 4px;
    display: flex;
}

.grp-title {
    margin-top: auto;
    height: 19px;
    line-height: 15px;
    text-align: center;
    font-weight: 700;
    white-space: nowrap;
}

.col {
    flex: none;
    display: flex;
    flex-direction: column;
}

.sm {
    height: 22px;
    display: flex;
    align-items: center;
    padding-left: 2px;
}

.large {
    flex: none;
    display: flex;
    flex-direction: column;
    align-items: center;
}

.lg-ic {
    height: 37px;
    display: flex;
    align-items: center;
    justify-content: center;
    flex: none;
}

.large-full {
    width: 100%;
}

.lbl {
    line-height: 13px;
    white-space: nowrap;
    display: flex;
    align-items: center;
    gap: 3px;
}

.caret {
    display: block;
    width: 0;
    height: 0;
    margin: 0 1px;
    border: 3px solid transparent;
    border-top: 3.5px solid #111;
    border-bottom: 0;
    flex: none;
}

.caret-low {
    margin-top: 5px;
}

.caret-in {
    margin-top: 1px;
}

.g-views {
    width: 231px;
}

.view-rows {
    height: 71px;
    margin-top: 4px;
    padding-left: 4px;
    display: flex;
    flex-direction: column;
}

.view-row {
    height: 22px;
    display: flex;
    align-items: center;
}

.view-row-first {
    margin-bottom: 1px;
}

.cell {
    width: 24px;
    flex: none;
    display: flex;
    justify-content: center;
}

.persp {
    display: flex;
    align-items: center;
    gap: 2px;
    margin-left: 1px;
    white-space: nowrap;
    font-size: 11.3px;
}

.drop {
    box-sizing: border-box;
    height: 21px;
    border: 1px solid #dcdcdc;
    background: #fff;
    display: flex;
    align-items: center;
}

.drop-views {
    width: 200px;
    padding-left: 3px;
}

.drop-text {
    margin-left: 4px;
    font-size: 12.5px;
}

.drop-text-view {
    margin-left: 1px;
    line-height: 18px;
    margin-top: -2px;
}

.chev {
    margin-left: auto;
    margin-right: 7px;
    width: 5px;
    height: 5px;
    border-right: 1px solid #333;
    border-bottom: 1px solid #333;
    transform: rotate(45deg) translate(-1px, -1px);
}

.g-select {
    width: 66px;
}

.g-layers {
    width: 285px;
}

.g-layers-lg {
    width: 57px;
}

.g-layers-col {
    width: 22px;
}

.layer-main {
    width: 199px;
    display: flex;
    flex-direction: column;
}

.tiny {
    width: 18px;
    flex: none;
    display: flex;
    justify-content: center;
}

.layer-icons {
    height: 22px;
    margin: 1px 0;
    display: flex;
    align-items: center;
}

.layer-icons .caret {
    margin-left: 0;
}

.g-groups {
    width: 115px;
}

.g-group-a {
    width: 50px;
}

.g-group-b {
    width: 64px;
}

.g-compare {
    width: 56px;
    border-right: 0;
}

.swatch {
    display: inline-block;
    width: 11px;
    height: 11px;
    border: 1px solid #333;
    background: #ff8000;
    margin: 0 5px 0 2px;
    flex: none;
}

.swatch-lg {
    width: 12px;
    height: 14px;
    margin: 0 1px 0 3px;
}

.work {
    height: 857px;
    flex: none;
    display: flex;
}

.left {
    width: 1590px;
    flex: none;
    display: flex;
    flex-direction: column;
    border-right: 2px solid #6f6f6f;
    box-sizing: content-box;
}

.docs {
    height: 16px;
    flex: none;
    display: flex;
    background: #fff;
    border-bottom: 2px solid #666;
    line-height: 16px;
}

.doc {
    display: flex;
    box-sizing: border-box;
    padding-left: 12px;
    background: #fff;
    margin-right: 4px;
    color: #333;
    font-size: 11.5px;
}

.doc b {
    margin-left: auto;
    margin-right: 4px;
    color: #777;
    font-size: 12px;
}

.doc-start {
    width: 66px;
}

.doc-mid {
    width: 91px;
}

.doc-active {
    width: 131px;
    margin-right: 0;
    padding-left: 9px;
    background: #eee;
    font-weight: 700;
    color: #111;
}

.doc-active b {
    margin-right: 6px;
}

.doc-plus {
    width: 26px;
    text-align: center;
    font-size: 15px;
    background: #fff;
}

.view {
    display: block;
    flex: none;
}

.axis {
    font-size: 14px;
    font-family: "Liberation Sans", sans-serif;
    text-anchor: middle;
}

.layouts {
    height: 16px;
    flex: none;
    padding-top: 1px;
    display: flex;
    align-items: center;
    border-bottom: 2px solid #666;
    background: #fff;
}

.nav {
    display: block;
    flex: none;
}

.lay {
    padding: 0 5px 0 4px;
    height: 16px;
    line-height: 16px;
    background: #fff;
}

.lay-on {
    font-weight: 700;
    padding: 0 3px 0 4px;
    background: #e8e8e8;
}

.lay-plus {
    font-size: 14px;
    padding: 0 4px;
}

.cmd {
    height: 97px;
    flex: none;
    display: flex;
}

.cmd-strip {
    width: 8px;
    flex: none;
    background: #eee;
    font-size: 8px;
    color: #888;
    padding-top: 4px;
    box-sizing: border-box;
}

.cmd-strip span {
    display: block;
    height: 20px;
}

.cmd-grip {
    display: flex;
    flex-direction: column;
    align-items: center;
    gap: 1px;
    margin-top: 16px;
}

.cmd-body {
    flex: 1;
    position: relative;
    padding-left: 6px;
    font-family: "DejaVu Sans Mono", monospace;
    font-size: 11.5px;
    color: #555;
}

.cmd-hist {
    display: flex;
    flex-direction: column;
    padding-top: 9px;
    line-height: 15px;
}

.cmd-line {
    margin-top: 11px;
    margin-left: -5px;
}

.cmd-line b {
    color: #111;
}

.cmd-scroll {
    position: absolute;
    right: 7px;
    top: 42px;
    width: 2px;
    height: 18px;
    background: #444;
}

.panel {
    flex: 1;
    background: #fff;
    min-width: 0;
}

.panel-top {
    height: 7px;
    background: #e6e6e6;
    display: flex;
    align-items: center;
    position: relative;
    justify-content: center;
}

.panel-grip {
    display: flex;
    gap: 1px;
}

.panel-grip i {
    width: 2px;
    height: 2px;
    background: #444;
}

.panel-x {
    position: absolute;
    right: 1px;
    top: -1px;
    font-size: 8px;
    line-height: 8px;
    color: #888;
}

.filter {
    height: 23px;
    margin-top: 4px;
    padding-left: 4px;
    display: flex;
    align-items: center;
}

.drop-all {
    width: 277px;
    height: 23px;
    flex: none;
}

.drop-all .drop-text {
    margin-left: 1px;
    font-size: 12px;
}

.filter-ic {
    margin-left: 1px;
}

.eye-btn {
    width: 22px;
    height: 22px;
    margin-left: 3px;
    border-radius: 3px;
    background: #cbe4fa;
    display: flex;
    align-items: center;
    justify-content: center;
}

.props {
    margin-top: 3px;
}

.prow {
    height: 18px;
    line-height: 18px;
    display: flex;
    box-sizing: border-box;
    font-size: 11px;
}

.gutter {
    width: 16px;
    flex: none;
    display: flex;
    align-items: center;
    padding-left: 4px;
    box-sizing: border-box;
}

.toggle {
    display: block;
    width: 9px;
    height: 9px;
    border: 1px solid #777;
    box-sizing: border-box;
    background: linear-gradient(#888, #888) center / 5px 1px no-repeat #f4f4f4;
}

.pk {
    width: 120px;
    flex: none;
    box-sizing: border-box;
    padding-left: 3px;
    border-left: 1px solid #cfcfcf;
    border-bottom: 1px solid #cfcfcf;
    border-right: 1px solid #cfcfcf;
    white-space: nowrap;
}

.pk-sub {
    padding-left: 19px;
}

.pv {
    flex: 1;
    padding-left: 3px;
    display: flex;
    align-items: center;
    border-bottom: 1px solid #cfcfcf;
    white-space: pre;
}

.pv-dim {
    color: #9a9a9a;
}

.rule {
    display: block;
    width: 96px;
    height: 1px;
    margin: 0 4px 0 3px;
    background: #111;
}

.prow-head {
    background: #d3d3d3;
    font-weight: 700;
    font-size: 12px;
}

.prow-head .gutter {
    background: #fff;
}

.prow-head .pk {
    border: 0;
    font-weight: 700;
    width: 200px;
}

.status {
    height: 19px;
    flex: none;
    display: flex;
    align-items: center;
    font-size: 11.5px;
    color: #333;
    padding-left: 2px;
}

.st-items {
    margin-left: auto;
    display: flex;
    height: 15px;
    align-items: center;
}

.st {
    height: 15px;
    line-height: 15px;
    padding: 0 3px;
    border-left: 1px solid #d8d8d8;
    white-space: nowrap;
}

.st:first-child {
    padding-left: 60px;
}

.st b {
    font-weight: 400;
    display: block;
}

.st-off {
    color: #b4b4b4;
}

.st-on {
    background: #d0d0d0;
}

.st-end {
    width: 60px;
    box-sizing: border-box;
    padding-top: 6px;
}

.taskbar {
    height: 48px;
    flex: none;
    display: flex;
    align-items: center;
    background: linear-gradient(90deg, #2a2320, #35221b 20%, #2e2519 50%, #3a2715 75%, #2b2117);
}

.start {
    margin-left: 21px;
    flex: none;
}

.search {
    margin-left: 13px;
    width: 217px;
    height: 30px;
    border-radius: 15px;
    background: #f3f3f3;
    display: flex;
    align-items: center;
    padding-left: 11px;
    box-sizing: border-box;
    gap: 8px;
    color: #555;
    font-size: 14px;
    flex: none;
}

.apps {
    margin-left: 4px;
    display: flex;
}

.tapp {
    width: 44px;
    height: 44px;
    display: flex;
    align-items: center;
    justify-content: center;
    position: relative;
    box-sizing: border-box;
    border-radius: 4px;
}

.tapp-on {
    background: #3d332d;
    border: 1px solid #4a4039;
}

.tapp-on::after,
.tapp-run::after {
    content: "";
    position: absolute;
    bottom: 1px;
    left: 50%;
    transform: translateX(-50%);
    width: 6px;
    height: 3px;
    border-radius: 2px;
    background: #8b8b8b;
}

.tapp-on::after {
    width: 16px;
    background: #59c8ff;
}

.tray {
    margin-left: auto;
    display: flex;
    align-items: center;
    gap: 6px;
    padding-right: 20px;
    color: #fff;
}

.tray-chev {
    margin-right: 10px;
}

.clock {
    margin-left: 10px;
    display: flex;
    flex-direction: column;
    align-items: flex-end;
    font-size: 12px;
    line-height: 16px;
}
</style>

<style>
html,
body {
    margin: 0;
    overflow: hidden;
    background: #fff;
}
</style>
